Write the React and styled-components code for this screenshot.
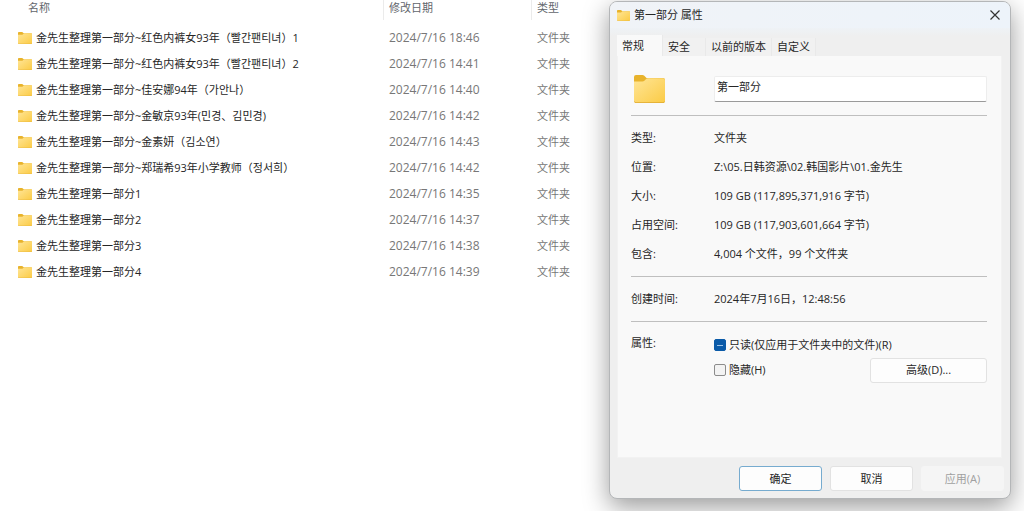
import React, { useEffect, useId, useRef, useState } from "react";

import styled, { createGlobalStyle } from "styled-components";

const GlobalStyle = createGlobalStyle`
  *, *::before, *::after {
    box-sizing: border-box;
  }

  body {
    margin: 0;
    background: #ffffff;
    color: #262626;
    font-family: "Open Sans", "Noto Sans CJK SC", sans-serif;
    font-size: 11px;
    line-height: 16px;
  }

  button, input {
    font: inherit;
    color: inherit;
  }
`;

const Desktop = styled.main`
  display: flex;
  align-items: stretch;
  min-height: 100vh;
  overflow: hidden;
`;

const Explorer = styled.section`
  flex: 1 1 0;
  min-width: 0;
`;

const FileTable = styled.table`
  width: 100%;
  table-layout: fixed;
  border-collapse: separate;
  border-spacing: 0;
`;

const DateCol = styled.col`
  width: 148px;
`;

const TypeCol = styled.col`
  width: 77px;
`;

const HeadCell = styled.th`
  height: 20px;
  padding: 0 0 4px ${(props) => (props.$first ? "28px" : "5px")};
  border-right: ${(props) => (props.$last ? "none" : "1px solid #ebebeb")};
  color: #62666c;
  font-weight: 400;
  text-align: left;
`;

const FileRows = styled.tbody`
  &::before {
    content: "";
    display: block;
    height: 5px;
  }
`;

const Cell = styled.td`
  height: 26px;
  padding: 0 0 0 5px;
  color: #777777;
  font-size: ${(props) => (props.$date ? "12px" : "11px")};
  white-space: nowrap;
`;

const NameCell = styled(Cell)`
  padding-left: 18px;
  color: #262626;
`;

const FileName = styled.div`
  display: flex;
  align-items: center;
  gap: 4px;
`;

const Dialog = styled.section`
  flex: 0 1 402px;
  display: flex;
  flex-direction: column;
  margin: 1px 13px 12px 0;
  border: 1px solid #b4b6b8;
  border-radius: 8px;
  background: #efefef;
  box-shadow: 0 8px 26px rgba(0, 0, 0, 0.4);
`;

const TitleBar = styled.header`
  display: flex;
  align-items: center;
  gap: 4px;
  height: 26px;
  padding: 0 8px 0 7px;
  border-radius: 7px 7px 0 0;
  background: linear-gradient(90deg, #f0f3f7, #edf3fa);
`;

const Title = styled.h1`
  flex: 1;
  margin: 0;
  font-size: 11px;
  font-weight: 400;
`;

const CloseButton = styled.button`
  display: flex;
  align-items: center;
  justify-content: center;
  width: 14px;
  height: 20px;
  padding: 0;
  border: none;
  background: none;
`;

const TabList = styled.div`
  display: flex;
  align-items: flex-end;
  height: 28px;
  padding: 0 7px;
  background: linear-gradient(180deg, #eef2f6, #efefef 8px);
`;

const Tab = styled.button`
  min-width: ${(props) => (props.$selected ? "46px" : "43px")};
  height: ${(props) => (props.$selected ? "21px" : "18px")};
  padding: 0 5px;
  border: none;
  border-right: 1px solid #e9e9e9;
  background: ${(props) => (props.$selected ? "#f9f9f9" : "#f1f1f1")};
  text-align: left;
`;

const Panel = styled.div`
  flex: 1;
  margin: 0 8px 0 7px;
  padding: 19px 14px 19px 13px;
  border: 1px solid #f2f2f2;
  border-top: none;
  background: #f9f9f9;
`;

const NameRow = styled.div`
  display: grid;
  grid-template-columns: 83px 1fr;
  align-items: center;
  padding-bottom: 12px;
`;

const BigIcon = styled.div`
  display: flex;
  padding-left: 3px;
`;

const NameInput = styled.input`
  width: 100%;
  height: 26px;
  padding: 0 2px 6px;
  border: 1px solid #ededed;
  border-bottom: 1px solid #9a9a9a;
  border-radius: 2px;
  background: #ffffff;
  outline: none;
`;

const Rule = styled.hr`
  height: 1px;
  margin: 0;
  border: none;
  background: #bfbfbf;
`;

const Details = styled.dl`
  display: grid;
  grid-template-columns: 83px 1fr;
  row-gap: 13px;
  margin: 0;
  padding: 14px 0;
`;

const Term = styled.dt`
  margin: 0;
`;

const Value = styled.dd`
  margin: 0;
  white-space: nowrap;
`;

const Attributes = styled.div`
  display: grid;
  grid-template-columns: 83px 1fr;
  padding-top: 13px;
`;

const AttributeRows = styled.div`
  padding-top: 2px;
`;

const AttributeRow = styled.div`
  display: flex;
  align-items: center;
  justify-content: space-between;
  height: ${(props) => (props.$tall ? "34px" : "16px")};
`;

const CheckLabel = styled.label`
  display: flex;
  align-items: center;
  gap: 3px;
  white-space: nowrap;
`;

const CheckInput = styled.input`
  appearance: none;
  display: flex;
  align-items: center;
  justify-content: center;
  width: 12px;
  height: 12px;
  margin: 0;
  border: 1px solid #8c8c8c;
  border-radius: 2px;
  background: #f3f3f3;

  &:checked,
  &:indeterminate {
    border-color: #0a5aa8;
    background: #0a5aa8;
  }

  &:indeterminate::after {
    content: "";
    width: 6px;
    height: 1px;
    background: #9cc3e6;
  }
`;

const Button = styled.button`
  width: ${(props) => (props.$wide ? "117px" : "83px")};
  height: 25px;
  padding: 0;
  border: 1px solid ${(props) => (props.$primary ? "#76abcf" : "#e2e2e2")};
  border-radius: 3px;
  background: #fdfdfd;

  &:disabled {
    border-color: #f5f5f5;
    background: #f5f5f5;
    color: #a0a0a0;
  }
`;

const Footer = styled.footer`
  display: flex;
  justify-content: flex-end;
  gap: 8px;
  padding: 8px 6px 7px;
`;

const files = [
  ["金先生整理第一部分~红色内裤女93年（빨간팬티녀）1", "2024/7/16 18:46"],
  ["金先生整理第一部分~红色内裤女93年（빨간팬티녀）2", "2024/7/16 14:41"],
  ["金先生整理第一部分~佳安娜94年（가안나）", "2024/7/16 14:40"],
  ["金先生整理第一部分~金敏京93年(민경、김민경)", "2024/7/16 14:42"],
  ["金先生整理第一部分~金素妍（김소연）", "2024/7/16 14:43"],
  ["金先生整理第一部分~郑瑞希93年小学教师（정서희）", "2024/7/16 14:42"],
  ["金先生整理第一部分1", "2024/7/16 14:35"],
  ["金先生整理第一部分2", "2024/7/16 14:37"],
  ["金先生整理第一部分3", "2024/7/16 14:38"],
  ["金先生整理第一部分4", "2024/7/16 14:39"],
];

const details = [
  ["类型:", "文件夹"],
  ["位置:", "Z:\\05.日韩资源\\02.韩国影片\\01.金先生"],
  ["大小:", "109 GB (117,895,371,916 字节)"],
  ["占用空间:", "109 GB (117,903,601,664 字节)"],
  ["包含:", "4,004 个文件，99 个文件夹"],
];

const tabs = ["常规", "安全", "以前的版本", "自定义"];

const FolderIcon = ({ width, height }) => {
  const id = useId();

  return (
    <svg width={width} height={height} viewBox='0 0 31 28' preserveAspectRatio='none' aria-hidden='true'>
      <defs>
        <linearGradient id={id} x1='0' y1='0' x2='1' y2='1'>
          <stop offset='0' stopColor='#ffe596' />
          <stop offset='1' stopColor='#fbcb45' />
        </linearGradient>
      </defs>
      <path d='M0 2Q0 0 2 0H8.500Q9.500 0 10.300.8L12.500 3H29Q31 3 31 5V10H0Z' fill='#e8b32c' />
      <path d='M0 6.500H8.500Q9.600 6.500 10.400 5.700L12.300 3.800Q13 3.200 14 3.200H29Q31 3.200 31 5.200V26Q31 28 29 28H2Q0 28 0 26Z' fill={`url(#${id})`} />
      <path d='M.3 26.400Q.6 27.600 2 27.600H29Q30.400 27.600 30.700 26.400' fill='none' stroke='#dda72e' strokeWidth='.8' />
    </svg>
  );
};

const Checkbox = ({ label, indeterminate = false }) => {
  const ref = useRef(null);

  useEffect(() => {
    ref.current.indeterminate = indeterminate;
  }, [indeterminate]);

  return (
    <CheckLabel>
      <CheckInput ref={ref} type='checkbox' />
      {label}
    </CheckLabel>
  );
};

const FileList = () => {
  return (
    <Explorer>
      <FileTable>
        <colgroup>
          <col />
          <DateCol />
          <TypeCol />
        </colgroup>
        <thead>
          <tr>
            <HeadCell $first>名称</HeadCell>
            <HeadCell>修改日期</HeadCell>
            <HeadCell $last>类型</HeadCell>
          </tr>
        </thead>
        <FileRows>
          {files.map(([name, date]) => (
            <tr key={name}>
              <NameCell>
                <FileName>
                  <FolderIcon width={14} height={12} />
                  <span>{name}</span>
                </FileName>
              </NameCell>
              <Cell $date>{date}</Cell>
              <Cell>文件夹</Cell>
            </tr>
          ))}
        </FileRows>
      </FileTable>
    </Explorer>
  );
};

const PropertiesDialog = () => {
  const [tab, setTab] = useState(tabs[0]);
  const [name, setName] = useState("第一部分");

  return (
    <Dialog role='dialog' aria-labelledby='dialog-title'>
      <TitleBar>
        <FolderIcon width={13} height={11} />
        <Title id='dialog-title'>第一部分 属性</Title>
        <CloseButton type='button' aria-label='关闭'>
          <svg width='10' height='10' viewBox='0 0 10 10' aria-hidden='true'>
            <path d='M.5.5 9.500 9.500M9.500.5.5 9.500' stroke='#333333' strokeWidth='1.200' />
          </svg>
        </CloseButton>
      </TitleBar>
      <TabList role='tablist'>
        {tabs.map((item) => (
          <Tab
            key={item}
            type='button'
            role='tab'
            aria-selected={item === tab}
            $selected={item === tab}
            onClick={() => setTab(item)}
          >
            {item}
          </Tab>
        ))}
      </TabList>
      <Panel role='tabpanel'>
        <NameRow>
          <BigIcon>
            <FolderIcon width={31} height={28} />
          </BigIcon>
          <NameInput
            aria-label='名称'
            value={name}
            onChange={(e) => setName(e.target.value)}
          />
        </NameRow>
        <Rule />
        <Details>
          {details.map(([term, value]) => (
            <React.Fragment key={term}>
              <Term>{term}</Term>
              <Value>{value}</Value>
            </React.Fragment>
          ))}
        </Details>
        <Rule />
        <Details>
          <Term>创建时间:</Term>
          <Value>2024年7月16日，12:48:56</Value>
        </Details>
        <Rule />
        <Attributes>
          <div>属性:</div>
          <AttributeRows>
            <AttributeRow>
              <Checkbox label='只读(仅应用于文件夹中的文件)(R)' indeterminate />
            </AttributeRow>
            <AttributeRow $tall>
              <Checkbox label='隐藏(H)' />
              <Button type='button' $wide>高级(D)...</Button>
            </AttributeRow>
          </AttributeRows>
        </Attributes>
      </Panel>
      <Footer>
        <Button type='button' $primary>确定</Button>
        <Button type='button'>取消</Button>
        <Button type='button' disabled>应用(A)</Button>
      </Footer>
    </Dialog>
  );
};

const App = () => {
  return (
    <Desktop>
      <GlobalStyle />
      <FileList />
      <PropertiesDialog />
    </Desktop>
  );
};

export default App;
